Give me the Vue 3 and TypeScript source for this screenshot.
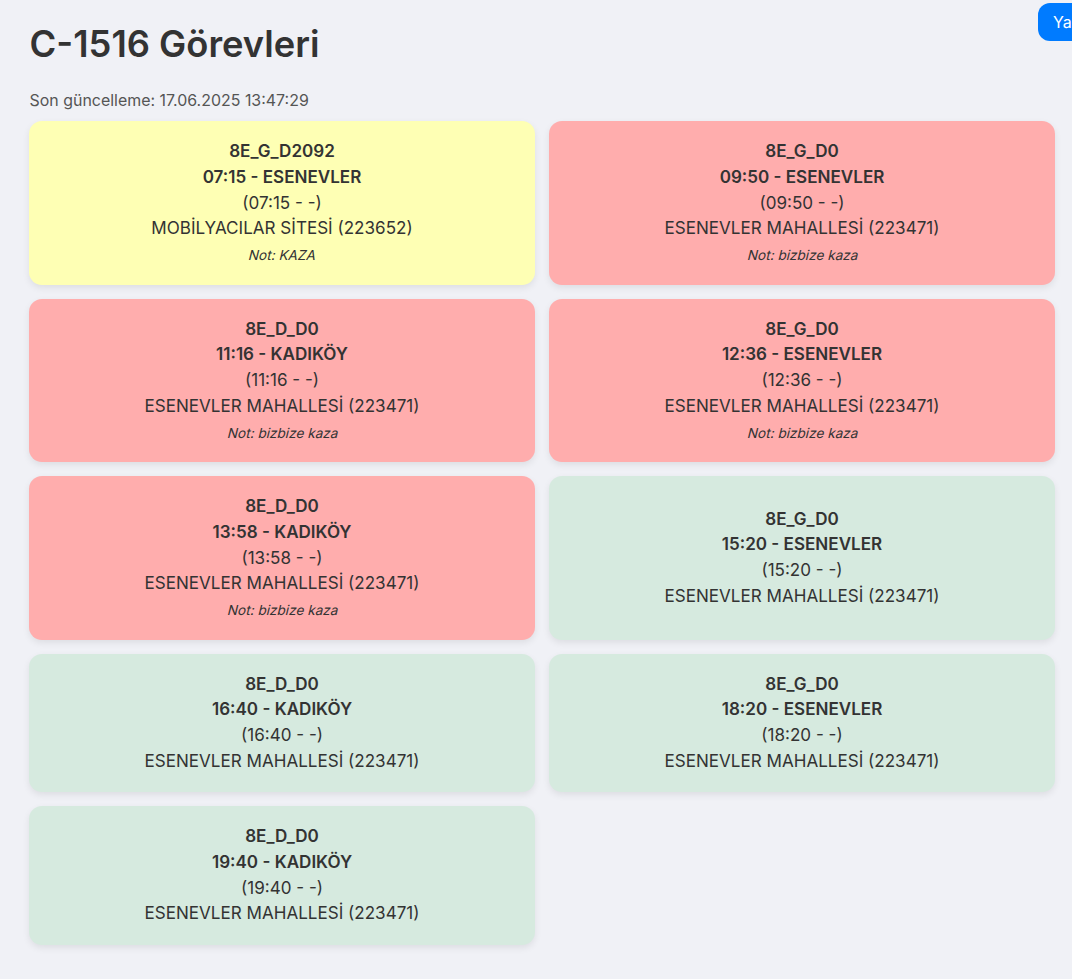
<template>
  <div class="page">

    <button class="refresh">Yazdır</button>

    <h1>{{ vehicle }} Görevleri</h1>
    <p class="updated">Son güncelleme: {{ lastUpdate }}</p>

    <div class="grid">
      <div
        v-for="(task, index) in tasks"
        :key="index"
        class="card"
        :class="task.status"
      >
        <strong>{{ task.route }}</strong>
        <strong>{{ task.time }} - {{ task.direction }}</strong>
        <span>({{ task.time }} - -)</span>
        <span>{{ task.driver }}</span>
        <em v-if="task.note">Not: {{ task.note }}</em>
      </div>
    </div>

  </div>
</template>

<script setup lang="ts">

import { ref } from 'vue'

interface Task {
  route: string
  time: string
  direction: string
  driver: string
  status: 'warning' | 'cancelled' | 'planned'
  note?: string
}

const vehicle = ref<string>('C-1516')
const lastUpdate = ref<string>('17.06.2025 13:47:29')

const esenevler = 'ESENEVLER MAHALLESİ (223471)'

const tasks = ref<Task[]>([
  { route: '8E_G_D2092', time: '07:15', direction: 'ESENEVLER', driver: 'MOBİLYACILAR SİTESİ (223652)', status: 'warning', note: 'KAZA' },
  { route: '8E_G_D0', time: '09:50', direction: 'ESENEVLER', driver: esenevler, status: 'cancelled', note: 'bizbize kaza' },
  { route: '8E_D_D0', time: '11:16', direction: 'KADIKÖY', driver: esenevler, status: 'cancelled', note: 'bizbize kaza' },
  { route: '8E_G_D0', time: '12:36', direction: 'ESENEVLER', driver: esenevler, status: 'cancelled', note: 'bizbize kaza' },
  { route: '8E_D_D0', time: '13:58', direction: 'KADIKÖY', driver: esenevler, status: 'cancelled', note: 'bizbize kaza' },
  { route: '8E_G_D0', time: '15:20', direction: 'ESENEVLER', driver: esenevler, status: 'planned' },
  { route: '8E_D_D0', time: '16:40', direction: 'KADIKÖY', driver: esenevler, status: 'planned' },
  { route: '8E_G_D0', time: '18:20', direction: 'ESENEVLER', driver: esenevler, status: 'planned' },
  { route: '8E_D_D0', time: '19:40', direction: 'KADIKÖY', driver: esenevler, status: 'planned' }
])

</script>

<style>
body {
  background: #f0f1f6;
}
</style>

<style scoped>

.page {
  position: relative;
  box-sizing: border-box;
  min-height: 979px;
  padding: 16px 17px 30px 29px;
  overflow: hidden;
  color: #333;
  font-family: Inter, sans-serif;
}

.refresh {
  position: absolute;
  top: 3px;
  left: 1038px;
  height: 38px;
  padding: 0 15px;
  border: none;
  border-radius: 12px;
  background: #007bff;
  color: #fff;
  font-family: Inter, sans-serif;
  font-size: 16px;
  white-space: nowrap;
}

h1 {
  margin: 0;
  padding-left: 0.6px;
  font-size: 36.3px;
  font-weight: 600;
  line-height: 56px;
}

.updated {
  margin: 17px 0 8.3px;
  padding-left: 0.5px;
  color: #555;
  font-size: 15.95px;
  line-height: 24px;
}

.grid {
  display: grid;
  grid-template-columns: 1fr 1fr;
  gap: 13.9px 14px;
}

.card {
  display: flex;
  flex-direction: column;
  align-items: center;
  justify-content: center;
  padding: 16.9px 18px 19.1px;
  border-radius: 13px;
  box-shadow: 0 3px 7px rgba(0, 0, 0, 0.08);
  font-size: 17.07px;
  line-height: 25.65px;
}

.card strong {
  font-weight: 600;
}

.card em {
  margin-top: 4.3px;
  padding-left: 2px;
  font-size: 13.6px;
  font-style: normal;
  line-height: 20.7px;
  transform: skewX(-14deg);
}

.warning {
  background: #feffb4;
}

.cancelled {
  background: #ffadad;
}

.planned {
  background: #d6eadf;
}

</style>
